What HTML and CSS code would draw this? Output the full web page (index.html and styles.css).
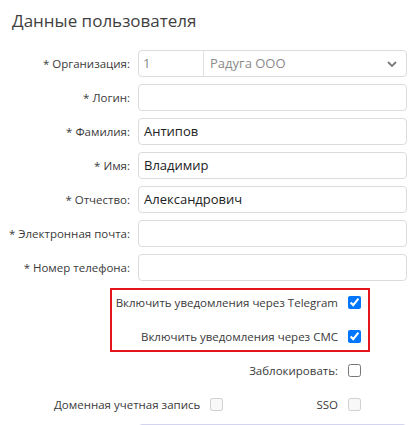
FILE: index.html
```html
<!DOCTYPE html>
<html lang="ru">
<head>
<meta charset="utf-8">
<link rel="stylesheet" href="styles.css">
</head>
<body>
<div class="page">
  <h2 class="title">Данные пользователя</h2>
  <div class="form">
    <div class="row">
      <label class="lbl">* Организация:</label>
      <div class="field select">
        <span class="code">1</span>
        <span class="org">Радуга ООО</span>
        <svg class="chev" width="10" height="6" viewBox="0 0 10 6"><polyline points="1,1 5,5 9,1" fill="none" stroke="#7a7a7a" stroke-width="1.8"/></svg>
      </div>
    </div>
    <div class="row">
      <label class="lbl">* Логин:</label>
      <div class="field"></div>
    </div>
    <div class="row">
      <label class="lbl">* Фамилия:</label>
      <div class="field">Антипов</div>
    </div>
    <div class="row">
      <label class="lbl">* Имя:</label>
      <div class="field">Владимир</div>
    </div>
    <div class="row">
      <label class="lbl">* Отчество:</label>
      <div class="field">Александрович</div>
    </div>
    <div class="row">
      <label class="lbl">* Электронная почта:</label>
      <div class="field"></div>
    </div>
    <div class="row">
      <label class="lbl">* Номер телефона:</label>
      <div class="field"></div>
    </div>
    <div class="notify">
      <div class="crow first">
        <span>Включить уведомления через Telegram</span>
        <input type="checkbox" class="cb" checked>
      </div>
      <div class="crow second">
        <span>Включить уведомления через СМС</span>
        <input type="checkbox" class="cb" checked>
      </div>
    </div>
    <div class="crow block">
      <span>Заблокировать:</span>
      <input type="checkbox" class="cb">
    </div>
    <div class="crow dual">
      <span>Доменная учетная запись</span>
      <input type="checkbox" class="cb" disabled>
      <span class="sso">SSO</span>
      <input type="checkbox" class="cb" disabled>
    </div>
    <div class="row last">
      <span class="lbl"></span>
      <div class="field next"></div>
    </div>
  </div>
</div>
</body>
</html>
```

FILE: styles.css
```css
html, body {
  margin: 0;
  padding: 0;
  background: #ffffff;
}
body {
  font-family: "Open Sans", "Noto Sans", sans-serif;
  color: #333333;
  width: 414px;
  height: 425px;
  overflow: hidden;
}
.page {
  padding-top: 9px;
}
.title {
  margin: 0 0 0 12px;
  font-size: 17px;
  font-weight: 400;
  line-height: 24px;
  color: #3f3f3f;
}
.form {
  margin-top: 17px;
  display: flex;
  flex-direction: column;
}
.row {
  display: grid;
  grid-template-columns: 130px 269px;
  column-gap: 8px;
  align-items: center;
  height: 27px;
  margin-bottom: 7px;
}
.lbl {
  text-align: right;
  font-size: 11.5px;
  color: #3a3a3a;
  white-space: nowrap;
}
.field {
  box-sizing: border-box;
  height: 27px;
  border: 1px solid #dcdcdc;
  border-radius: 4px;
  padding: 0 5px;
  font-size: 13px;
  line-height: 25px;
  color: #222222;
  display: flex;
  align-items: center;
}
.select {
  padding: 0;
  color: #8a8a8a;
}
.select .code {
  width: 65px;
  box-sizing: border-box;
  padding-left: 4px;
  border-right: 1px solid #e2e2e2;
  height: 25px;
}
.select .org {
  flex: 1;
  padding-left: 6px;
}
.select .chev {
  margin-right: 9px;
}
.notify {
  box-sizing: border-box;
  margin-left: 110px;
  width: 260px;
  height: 64px;
  border: 2px solid #e3141b;
  padding-right: 7px;
  display: flex;
  flex-direction: column;
}
.crow {
  display: flex;
  align-items: center;
  justify-content: flex-end;
  font-size: 11.5px;
  color: #3a3a3a;
  height: 24px;
}
.crow span {
  margin-right: 10px;
  white-space: nowrap;
}
.notify .second {
  margin-top: 10px;
}
.block {
  width: 361px;
  margin-top: 6px;
}
.dual {
  width: 361px;
  margin-top: 10px;
  padding-left: 54px;
  box-sizing: border-box;
}
.dual .sso {
  margin-left: auto;
}
.cb {
  margin: 0;
  width: 13px;
  height: 13px;
  flex: none;
}
.last {
  margin-top: 8px;
}
.next {
  border-color: #d4d4ee;
}
```
